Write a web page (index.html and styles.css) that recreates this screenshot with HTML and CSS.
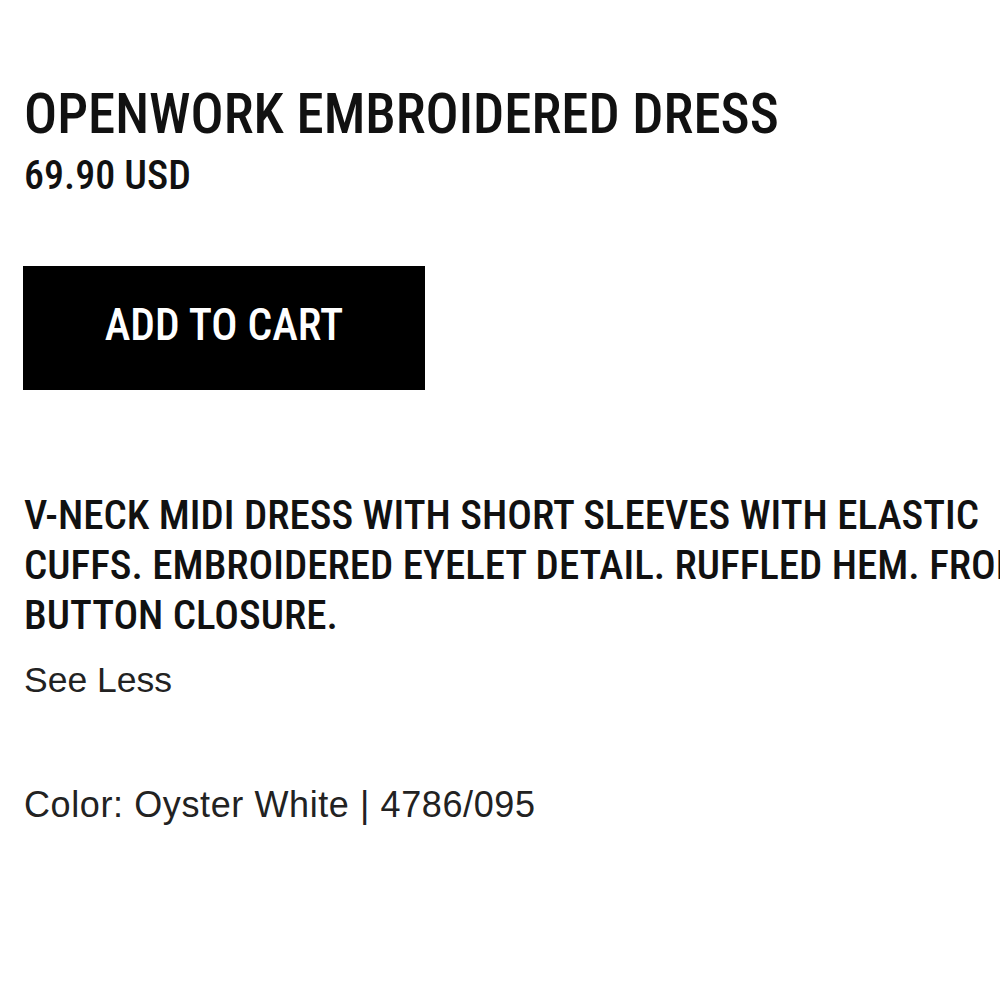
FILE: index.html
```html
<!DOCTYPE html>
<html lang="en">
<head>
    <meta charset="UTF-8">
    <title>Openwork Embroidered Dress</title>
    <link rel="stylesheet" href="styles.css">
</head>
<body>
<div class="product">
    <h1 class="name">OPENWORK EMBROIDERED DRESS</h1>
    <div class="price">69.90 USD</div>

    <button type="button" class="cartbtn">ADD TO CART</button>

    <p class="desc">V-NECK MIDI DRESS WITH SHORT SLEEVES WITH ELASTIC CUFFS. EMBROIDERED EYELET DETAIL. RUFFLED HEM. FRONT BUTTON CLOSURE.</p>
    <a class="toggle" href="#">See Less</a>

    <div class="color">Color: Oyster White | 4786/095</div>
</div>
</body>
</html>
```

FILE: styles.css
```css
* {
    box-sizing: border-box;
}

html, body {
    overflow: hidden;
}

body {
    margin: 0;
    background: #fff;
    color: #111;
    font-family: Roboto, "Liberation Sans", Arial, sans-serif;
    font-stretch: condensed;
    font-weight: 500;
}

.product {
    padding: 84px 0 0 24px;
    max-width: 100vw;
}

.name {
    margin: 0;
    font-size: 55px;
    font-weight: 500;
    line-height: 60px;
    white-space: nowrap;
}

.price {
    margin-top: 10px;
    font-size: 40px;
    line-height: 44px;
}

.cartbtn {
    display: flex;
    align-items: center;
    justify-content: center;
    margin: 68px 0 0 -1px;
    padding: 0 0 5px 0;
    width: 402px;
    height: 124px;
    border: none;
    background: #000;
    color: #fff;
    font-family: inherit;
    font-stretch: condensed;
    font-weight: 500;
    font-size: 43.5px;
    line-height: 46px;
    cursor: pointer;
}

/* description runs wider than the screen, like the app view */
.desc {
    margin: 100px 0 0 0;
    width: 1060px;
    font-size: 41px;
    line-height: 50px;
}

/* plain helvetica-like text below the description */
.toggle, .color {
    display: block;
    color: #222;
    text-decoration: none;
    font-family: "Liberation Sans", Arial, sans-serif;
    font-stretch: normal;
    font-weight: normal;
    line-height: 42px;
}

.toggle {
    margin-top: 19px;
    font-size: 35.5px;
}

.color {
    margin-top: 83px;
    font-size: 36px;
    letter-spacing: 0.6px;
}
```
